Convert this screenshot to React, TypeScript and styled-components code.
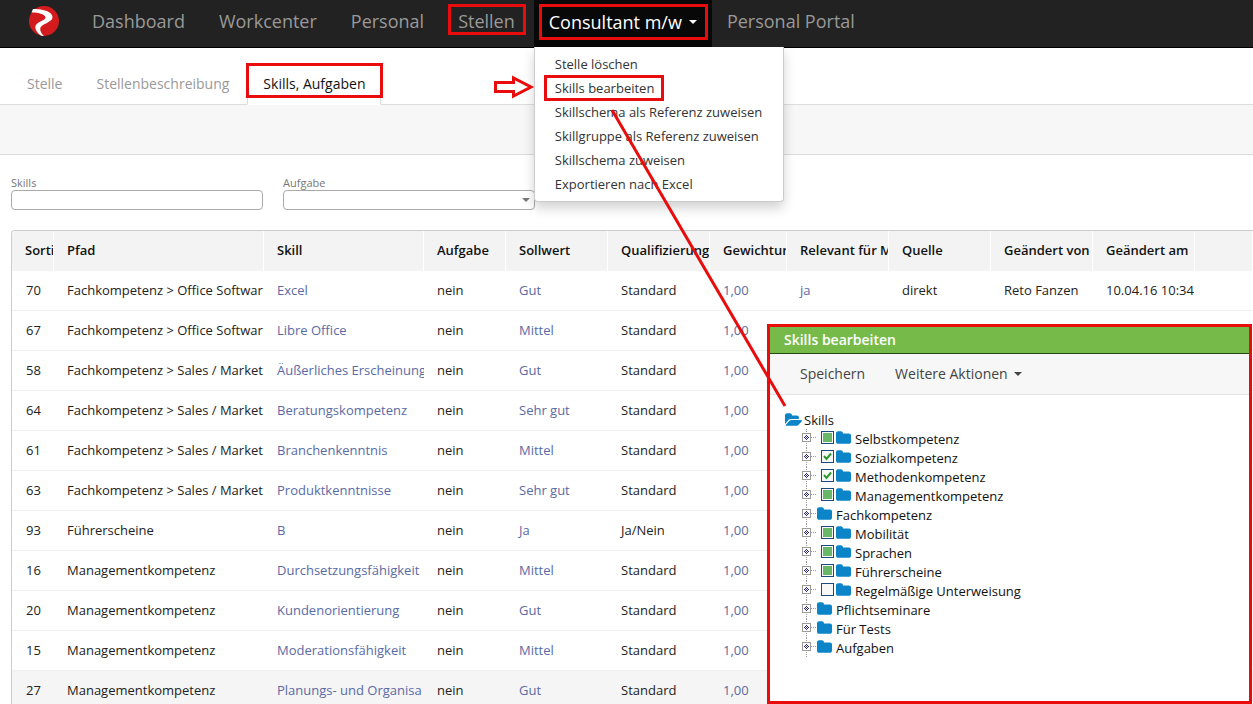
import React, { useEffect, useRef, useState } from "react";
import styled, { createGlobalStyle, css } from "styled-components";

const RED = "#e80c0c";
const BLUE = "#0c85c8";
const LINK = "#5a6aa6";

const Global = createGlobalStyle`
  *, *::before, *::after { box-sizing: border-box; }
  body {
    margin: 0;
    background: #fff;
    color: #222;
    font: 13px/20px "Open Sans", sans-serif;
  }
  button, input, select { font: inherit; color: inherit; margin: 0; }
  a { text-decoration: none; color: inherit; }
`;

const Page = styled.div`
  position: relative;
  height: 100vh;
  overflow: hidden;
`;

type Inset = { $mark?: string };

const marked = css<Inset>`
  position: relative;
  ${({ $mark }) =>
    $mark &&
    css`
      &::after {
        content: "";
        position: absolute;
        inset: ${$mark};
        border: 3px solid ${RED};
        pointer-events: none;
      }
    `}
`;

/* ---------- top navigation ---------- */

const NavBar = styled.nav`
  display: flex;
  height: 48px;
  padding-left: 29px;
  background: #222;
  border-bottom: 1px solid #000;
`;

const Brand = styled.a`
  display: block;
  width: 30px;
  height: 30px;
  margin: 6px 18px 0 0;
`;

const NavList = styled.div`
  display: flex;
`;

const NavLink = styled.a<Inset>`
  ${marked}
  margin-right: 4px;
  padding: 0 15px;
  line-height: 43px;
  font-size: 18px;
  color: #999;
  white-space: nowrap;
`;

const NavToggle = styled.button<Inset>`
  ${marked}
  display: flex;
  align-items: center;
  gap: 7px;
  height: 47px;
  padding: 0 15px 4px;
  border: 0;
  background: #080808;
  font-size: 18px;
  color: #fff;
  white-space: nowrap;
`;

const Dropdown = styled.div`
  position: relative;
`;

const Menu = styled.div`
  position: absolute;
  z-index: 2;
  top: 47px;
  left: 0;
  width: 250px;
  padding: 5px 0;
  background: #fff;
  border: 1px solid #ccc;
  border-top: 0;
  border-radius: 0 0 4px 4px;
  box-shadow: 0 6px 12px rgba(0, 0, 0, 0.18);
`;

const MenuItem = styled.button<Inset>`
  ${marked}
  display: block;
  width: 100%;
  height: 24px;
  padding: 0 20px;
  border: 0;
  background: none;
  text-align: left;
  line-height: 24px;
  color: #333;
  white-space: nowrap;
`;

/* ---------- tabs and filters ---------- */

const Tabs = styled.div`
  display: flex;
  align-items: flex-end;
  gap: 2px;
  height: 57px;
  padding-left: 11px;
  border-bottom: 1px solid #ddd;
`;

const Tab = styled.a<Inset & { $active?: boolean }>`
  ${marked}
  height: 41px;
  margin-bottom: -1px;
  padding: 0 15px;
  border: 1px solid transparent;
  line-height: 38px;
  font-size: 14px;
  color: #999;
  ${({ $active }) =>
    $active &&
    css`
      color: #111;
      background: #fff;
      border-color: #ddd #ddd #fff;
    `}
`;

const ActionBand = styled.div`
  height: 50px;
  background: #f7f7f7;
  border-bottom: 1px solid #ddd;
`;

const Filters = styled.form`
  display: flex;
  gap: 20px;
  padding: 20px 11px 20px;
`;

const Field = styled.label`
  display: block;
  width: 252px;
  line-height: 15px;
  font-size: 11px;
  color: #777;
`;

const control = css`
  display: block;
  width: 100%;
  height: 20px;
  padding: 0 6px;
  border: 1px solid #aaa;
  border-radius: 4px;
  background: #fff;
  outline: none;
`;

const TextInput = styled.input`
  ${control}
`;

const SelectBox = styled.span`
  display: grid;
  align-items: center;
  & > * {
    grid-area: 1 / 1;
  }
  svg {
    justify-self: end;
    margin-right: 5px;
    pointer-events: none;
  }
`;

const Select = styled.select`
  ${control}
  appearance: none;
`;

/* ---------- skill table ---------- */

const TableFrame = styled.div`
  margin-left: 11px;
  border: solid #ccc;
  border-width: 1px 0 0 1px;
  border-radius: 4px 0 0 0;
  overflow: hidden;
`;

const Table = styled.table`
  width: 100%;
  table-layout: fixed;
  border-collapse: separate;
  border-spacing: 0;
`;

const HeadCell = styled.th`
  height: 40px;
  padding: 0 0 3px 13px;
  background: #f3f3f3;
  border-right: 1px solid #fff;
  text-align: left;
  font-weight: 600;
  color: #111;
  white-space: nowrap;
  overflow: hidden;
`;

const Row = styled.tr<{ $shaded?: boolean }>`
  background: ${({ $shaded }) => ($shaded ? "#f5f5f5" : "#fff")};
`;

const Cell = styled.td`
  height: 40px;
  padding: 0 0 2px 13px;
  border-bottom: 1px solid #f0f0f0;
  white-space: nowrap;
  overflow: hidden;
  &:first-child {
    padding-left: 14px;
  }
  a {
    color: ${LINK};
  }
`;

/* ---------- edit dialog ---------- */

const Dialog = styled.section`
  position: absolute;
  z-index: 3;
  top: 324px;
  bottom: 0;
  left: 767px;
  right: 1px;
  border: 3px solid ${RED};
  background: #fff;
`;

const DialogTitle = styled.h2`
  height: 27px;
  margin: 0;
  padding-left: 14px;
  background: #76bb4a;
  border-bottom: 1px solid #234a12;
  line-height: 26px;
  font-size: 14px;
  font-weight: 600;
  color: #fff;
`;

const DialogBar = styled.div`
  display: flex;
  gap: 30px;
  height: 41px;
  padding-left: 30px;
  background: #f7f7f7;
  border-bottom: 1px solid #e2e2e2;
`;

const DialogAction = styled.button`
  display: flex;
  align-items: center;
  gap: 6px;
  padding: 0;
  border: 0;
  background: none;
  font-size: 14px;
  color: #444;
`;

const Tree = styled.div`
  padding: 15px 0 0 15px;
  color: #111;
`;

const TreeRoot = styled.div`
  display: flex;
  align-items: flex-start;
  gap: 2px;
  height: 19px;
  svg {
    margin-top: 3px;
  }
`;

const Branches = styled.ul`
  margin: 0;
  padding: 0 0 0 17px;
  list-style: none;
`;

const Branch = styled.li`
  display: flex;
  align-items: center;
  height: 19px;
`;

const Expander = styled.button`
  display: block;
  width: 15px;
  height: 19px;
  padding: 0;
  border: 0;
  background: none;
  svg {
    display: block;
  }
`;

const BranchLabel = styled.label`
  display: flex;
  align-items: center;
  height: 19px;
  white-space: nowrap;
`;

const Tick = styled.span`
  display: grid;
  place-items: center;
  margin: 0 2px 2px 4px;
  & > * {
    grid-area: 1 / 1;
  }
  svg {
    pointer-events: none;
  }
`;

const TickInput = styled.input`
  appearance: none;
  width: 13px;
  height: 13px;
  border: 1px solid #1c4a7d;
  background: #f8f8f6;
`;

const FolderSvg = styled.svg`
  display: block;
  flex: none;
  margin: 0 4px 2px 0;
  fill: ${BLUE};
`;

const Annotations = styled.svg`
  position: absolute;
  z-index: 4;
  top: 0;
  left: 0;
  pointer-events: none;
`;

/* ---------- drawings ---------- */

const Caret = ({ color = "currentColor" }: { color?: string }) => (
  <svg width="8" height="4" viewBox="0 0 8 4" aria-hidden="true">
    <path d="M0 0h8L4 4z" fill={color} />
  </svg>
);

const Logo = () => (
  <svg width="30" height="30" viewBox="0 0 30 30" aria-hidden="true">
    <circle cx="15" cy="15" r="15" fill="#d31a1d" />
    <path
      d="M4 3C11 3 23 4.500 23.500 11C23.800 16.500 11.500 18 11.200 22.500C11 25.500 13 28 15 30L12.500 29.800C9 27.500 6.300 24.500 6.300 21C6.500 15.500 16.500 15 16.500 11.500C16.500 8.500 10 6.500 2.500 6.500Z"
      fill="#fff"
    />
  </svg>
);

const Folder = () => (
  <FolderSvg width="15" height="13" viewBox="64 128 1664 1408" aria-hidden="true">
    <path d="M1728 608v704q0 92-66 158t-158 66h-1216q-92 0-158-66t-66-158v-960q0-92 66-158t158-66h320q92 0 158 66t66 158v32h672q92 0 158 66t66 158z" />
  </FolderSvg>
);

const FolderOpen = () => (
  <svg width="17" height="13" viewBox="0 128 1879 1408" fill={BLUE} aria-hidden="true">
    <path d="M1879 952q0 31-31 66l-336 396q-43 51-120.5 86.500t-143.500 35.500h-1088q-34 0-60.500-13t-26.500-43q0-31 31-66l336-396q43-51 120.500-86.500t143.500-35.500h1088q34 0 60.500 13t26.500 43zm-343-344v160h-832q-94 0-197 47.500t-164 119.500l-337 396-5 6q0-4-.5-12.500t-.5-12.500v-960q0-92 66-158t158-66h320q92 0 158 66t66 158v32h544q92 0 158 66t66 158z" />
  </svg>
);

const ExpandMark = () => (
  <svg width="15" height="19" viewBox="0 0 15 19" shapeRendering="crispEdges" aria-hidden="true">
    <path d="M4.500 0v19M9 8.500h6" stroke="#999" strokeDasharray="1 1" fill="none" />
    <rect x="0.500" y="4.500" width="8" height="8" fill="#fff" stroke="#9a9a9a" />
    <path
      d="M4 6h1v1h-1zM3 7h1v1h-1zM5 7h1v1h-1zM2 8h1v1h-1zM4 8h1v1h-1zM6 8h1v1h-1zM3 9h1v1h-1zM5 9h1v1h-1zM4 10h1v1h-1z"
      fill="#22228a"
    />
  </svg>
);

/* ---------- data ---------- */

const columns: [string, number | undefined][] = [
  ["Sorti", 42],
  ["Pfad", 210],
  ["Skill", 160],
  ["Aufgabe", 82],
  ["Sollwert", 102],
  ["Qualifizierung", 102],
  ["Gewichtun", 77],
  ["Relevant für M", 102],
  ["Quelle", 102],
  ["Geändert von", 102],
  ["Geändert am", 102],
  ["", undefined],
];

type Skill = [number, string, string, string, string, string[]?];

const skills: Skill[] = [
  [70, "Fachkompetenz > Office Softwar", "Excel", "Gut", "Standard", ["ja", "direkt", "Reto Fanzen", "10.04.16 10:34"]],
  [67, "Fachkompetenz > Office Softwar", "Libre Office", "Mittel", "Standard"],
  [58, "Fachkompetenz > Sales / Market", "Äußerliches Erscheinung", "Gut", "Standard"],
  [64, "Fachkompetenz > Sales / Market", "Beratungskompetenz", "Sehr gut", "Standard"],
  [61, "Fachkompetenz > Sales / Market", "Branchenkenntnis", "Mittel", "Standard"],
  [63, "Fachkompetenz > Sales / Market", "Produktkenntnisse", "Sehr gut", "Standard"],
  [93, "Führerscheine", "B", "Ja", "Ja/Nein"],
  [16, "Managementkompetenz", "Durchsetzungsfähigkeit", "Mittel", "Standard"],
  [20, "Managementkompetenz", "Kundenorientierung", "Gut", "Standard"],
  [15, "Managementkompetenz", "Moderationsfähigkeit", "Mittel", "Standard"],
  [27, "Managementkompetenz", "Planungs- und Organisa", "Gut", "Standard"],
];

type TickState = "some" | "all" | "none";

const branches: [string, TickState?][] = [
  ["Selbstkompetenz", "some"],
  ["Sozialkompetenz", "all"],
  ["Methodenkompetenz", "all"],
  ["Managementkompetenz", "some"],
  ["Fachkompetenz"],
  ["Mobilität", "some"],
  ["Sprachen", "some"],
  ["Führerscheine", "some"],
  ["Regelmäßige Unterweisung", "none"],
  ["Pflichtseminare"],
  ["Für Tests"],
  ["Aufgaben"],
];

const menuItems = [
  "Stelle löschen",
  "Skills bearbeiten",
  "Skillschema als Referenz zuweisen",
  "Skillgruppe als Referenz zuweisen",
  "Skillschema zuweisen",
  "Exportieren nach Excel",
];

function TriStateTick({ initial }: { initial: TickState }) {
  const [state, setState] = useState<TickState>(initial);
  const ref = useRef<HTMLInputElement>(null);
  useEffect(() => {
    if (ref.current) ref.current.indeterminate = state === "some";
  }, [state]);
  return (
    <Tick>
      <TickInput
        ref={ref}
        type="checkbox"
        checked={state === "all"}
        onChange={(e) => setState(e.target.checked ? "all" : "none")}
      />
      {state === "some" && (
        <svg width="9" height="9" aria-hidden="true">
          <rect width="9" height="9" fill="#69b868" />
        </svg>
      )}
      {state === "all" && (
        <svg width="9" height="9" viewBox="0 0 9 9" aria-hidden="true">
          <path d="M1 4L3.500 7L8 1.500" stroke="#2c9a2c" strokeWidth="2" fill="none" />
        </svg>
      )}
    </Tick>
  );
}

export default function App() {
  return (
    <Page>
      <Global />
      <NavBar>
        <Brand href="#" aria-label="Start">
          <Logo />
        </Brand>
        <NavList>
          <NavLink href="#">Dashboard</NavLink>
          <NavLink href="#">Workcenter</NavLink>
          <NavLink href="#">Personal</NavLink>
          <NavLink href="#" $mark="4px 4px 12px 5px">Stellen</NavLink>
          <Dropdown>
            <NavToggle type="button" $mark="4px 4px 7px 5px">
              Consultant m/w
              <Caret />
            </NavToggle>
            <Menu>
              {menuItems.map((item, i) => (
                <MenuItem key={item} type="button" $mark={i === 1 ? "-1px 119px -1px 9px" : undefined}>
                  {item}
                </MenuItem>
              ))}
            </Menu>
          </Dropdown>
          <NavLink href="#">Personal Portal</NavLink>
        </NavList>
      </NavBar>

      <Tabs>
        <Tab href="#">Stelle</Tab>
        <Tab href="#">Stellenbeschreibung</Tab>
        <Tab href="#" $active $mark="-2px -3px 6px -2px">Skills, Aufgaben</Tab>
      </Tabs>
      <ActionBand />

      <Filters>
        <Field>
          Skills
          <TextInput type="text" />
        </Field>
        <Field>
          Aufgabe
          <SelectBox>
            <Select defaultValue="">
              <option value="" />
            </Select>
            <Caret color="#777" />
          </SelectBox>
        </Field>
      </Filters>

      <TableFrame>
        <Table>
          <colgroup>
            {columns.map(([name, width]) => (
              <col key={name} width={width} />
            ))}
          </colgroup>
          <thead>
            <tr>
              {columns.map(([name]) => (
                <HeadCell key={name}>{name}</HeadCell>
              ))}
            </tr>
          </thead>
          <tbody>
            {skills.map(([nr, path, skill, target, kind, rest], i) => (
              <Row key={nr} $shaded={i === skills.length - 1}>
                <Cell>{nr}</Cell>
                <Cell>{path}</Cell>
                <Cell><a href="#">{skill}</a></Cell>
                <Cell>nein</Cell>
                <Cell><a href="#">{target}</a></Cell>
                <Cell>{kind}</Cell>
                <Cell><a href="#">1,00</a></Cell>
                <Cell>{rest && <a href="#">{rest[0]}</a>}</Cell>
                <Cell>{rest?.[1]}</Cell>
                <Cell>{rest?.[2]}</Cell>
                <Cell>{rest?.[3]}</Cell>
                <Cell />
              </Row>
            ))}
          </tbody>
        </Table>
      </TableFrame>

      <Dialog aria-label="Skills bearbeiten">
        <DialogTitle>Skills bearbeiten</DialogTitle>
        <DialogBar>
          <DialogAction type="button">Speichern</DialogAction>
          <DialogAction type="button">
            Weitere Aktionen
            <Caret />
          </DialogAction>
        </DialogBar>
        <Tree>
          <TreeRoot>
            <FolderOpen />
            Skills
          </TreeRoot>
          <Branches>
            {branches.map(([name, tick]) => (
              <Branch key={name}>
                <Expander type="button" aria-label={name + " öffnen"}>
                  <ExpandMark />
                </Expander>
                <BranchLabel>
                  {tick && <TriStateTick initial={tick} />}
                  <Folder />
                  {name}
                </BranchLabel>
              </Branch>
            ))}
          </Branches>
        </Tree>
      </Dialog>

      <Annotations width="800" height="420" viewBox="0 0 800 420" aria-hidden="true">
        <path d="M612 110L785 406" stroke={RED} strokeWidth="3" />
        <path d="M495.500 82.500h18v-4.500l17.500 9l-17.500 9v-4.500h-18z" fill="#fff" stroke={RED} strokeWidth="3" />
      </Annotations>
    </Page>
  );
}
